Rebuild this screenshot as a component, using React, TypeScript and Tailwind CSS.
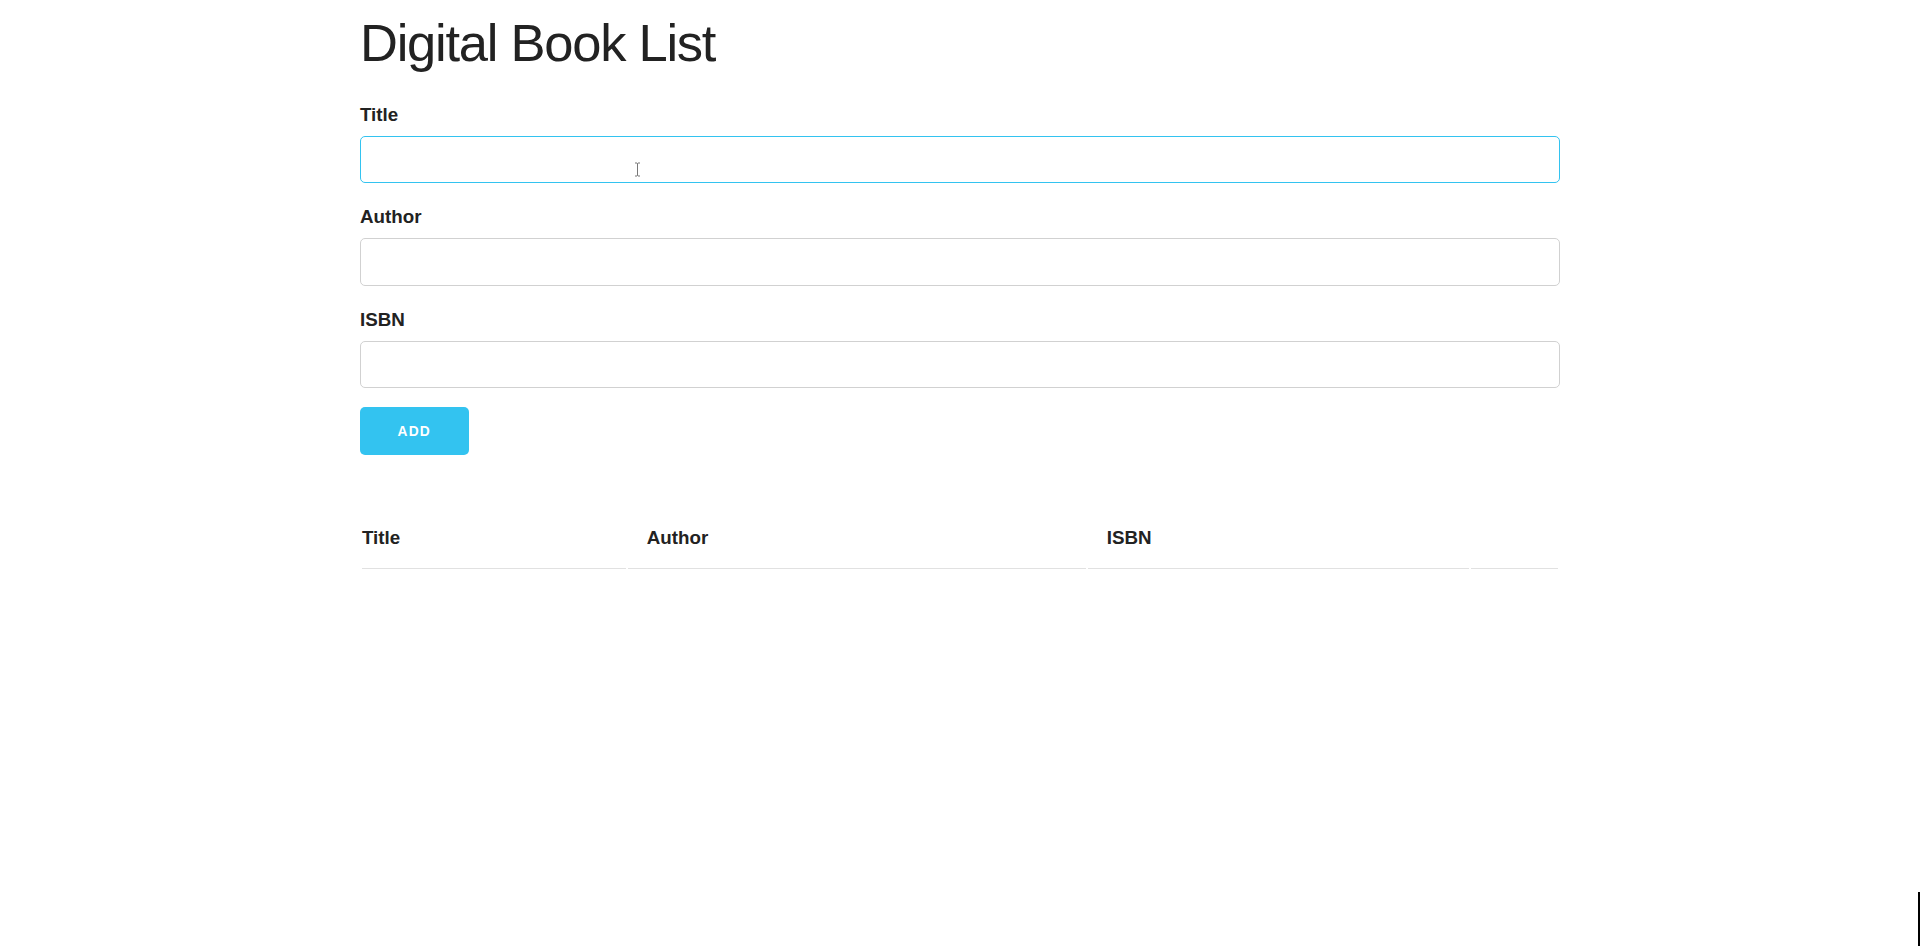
import React, { useState } from 'react';

interface Field {
  key: 'title' | 'author' | 'isbn';
  label: string;
}

const fields: Field[] = [
  { key: 'title', label: 'Title' },
  { key: 'author', label: 'Author' },
  { key: 'isbn', label: 'ISBN' },
];

const App: React.FC = () => {
  const [book, setBook] = useState({ title: '', author: '', isbn: '' });

  return (
    <div className="min-h-screen bg-white font-['Liberation_Sans',Arial,sans-serif] text-[#222]">
      <div className="mx-auto w-[1200px] pt-[11px]">
        {/* Heading */}
        <h1 className="mb-[24.5px] text-[52.5px] font-normal leading-[64px] tracking-[-1.25px]">
          Digital Book List
        </h1>

        {/* Form */}
        <form onSubmit={(e) => e.preventDefault()}>
          {fields.map((f, i) => (
            <div key={f.key}>
              <label className="mb-[6.25px] block text-[18.75px] font-bold leading-[30px]">
                {f.label}
              </label>
              <div className="relative">
                <input
                  type="text"
                  value={book[f.key]}
                  onChange={(e) => setBook({ ...book, [f.key]: e.target.value })}
                  className={
                    i === 0
                      ? 'mb-[18.75px] block h-[47.5px] w-full rounded-[5px] border border-[#33C3F0] px-[12.5px] text-[18.75px] outline-none'
                      : 'mb-[18.75px] block h-[47.5px] w-full rounded-[5px] border border-[#D1D1D1] px-[12.5px] text-[18.75px] outline-none'
                  }
                />
                {i === 0 && (
                  <svg
                    className="pointer-events-none absolute left-[274px] top-[26px]"
                    width="7"
                    height="15"
                    viewBox="0 0 7 15"
                  >
                    <path d="M1 1h2l0.5 0.6L4 1h2M3.5 1.6v11.8M1 14h2l0.5-0.6L4 14h2" stroke="#777" strokeWidth="1" fill="none" />
                  </svg>
                )}
              </div>
            </div>
          ))}
          <button
            type="submit"
            className="h-[47.5px] rounded-[5px] bg-[#33C3F0] px-[37.5px] pt-[2px] text-[13.75px] font-bold uppercase leading-[45px] tracking-[1.25px] text-white"
          >
            Add
          </button>
        </form>

        {/* Book table */}
        <table className="mt-[51.5px] w-full table-fixed border-separate border-spacing-[2.5px] text-left">
          <thead>
            <tr>
              <th className="w-[263.5px] border-b border-[#E1E1E1] py-[15px] pl-0 pr-[18.75px] text-[18.75px] font-bold leading-[30px]">
                Title
              </th>
              <th className="w-[457px] border-b border-[#E1E1E1] px-[18.75px] py-[15px] text-[18.75px] font-bold leading-[30px]">
                Author
              </th>
              <th className="w-[380.5px] border-b border-[#E1E1E1] px-[18.75px] py-[15px] text-[18.75px] font-bold leading-[30px]">
                ISBN
              </th>
              <th className="w-[86.5px] border-b border-[#E1E1E1] py-[15px] pl-[18.75px] pr-0 leading-[30px]"></th>
            </tr>
          </thead>
          <tbody></tbody>
        </table>
      </div>

      <div className="fixed bottom-0 right-0 h-[54px] w-[2px] bg-black"></div>
    </div>
  );
};

export default App;
